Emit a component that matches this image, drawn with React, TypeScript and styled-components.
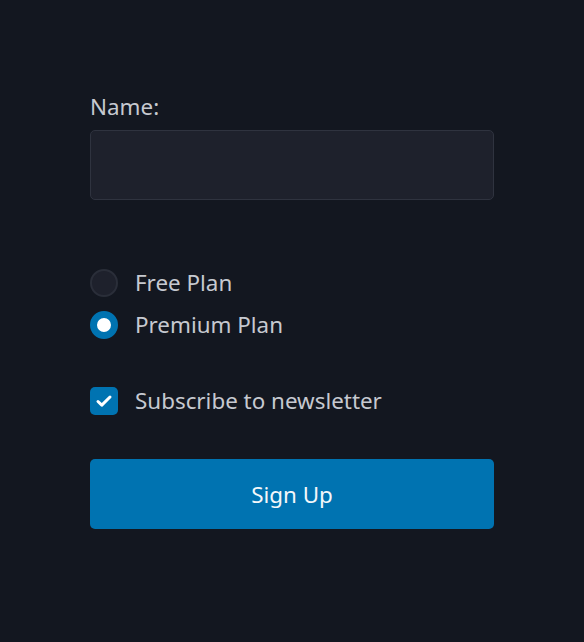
import styled, { createGlobalStyle } from 'styled-components';

const GlobalStyle = createGlobalStyle`
  html, body {
    margin: 0;
    padding: 0;
    background: #131720;
  }
  body {
    font-family: 'Noto Sans', 'Open Sans', sans-serif;
  }
`;

const Page = styled.div`
  min-height: 642px;
  display: flex;
  justify-content: center;
  padding-top: 92px;
  box-sizing: border-box;
`;

const Form = styled.form`
  width: 404px;
  display: flex;
  flex-direction: column;
`;

const Label = styled.label`
  font-size: 22.4px;
  line-height: 30px;
  color: #c6c9d0;
  margin-bottom: 8px;
`;

const TextInput = styled.input`
  height: 70px;
  box-sizing: border-box;
  background: #1e212c;
  border: 1px solid #2f333f;
  border-radius: 5px;
  color: #e5e7eb;
  font-size: 22.4px;
  padding: 0 16px;
  outline: none;
`;

const RadioGroup = styled.div`
  display: flex;
  flex-direction: column;
  gap: 14px;
  margin-top: 69px;
`;

const OptionRow = styled.label`
  display: flex;
  align-items: center;
  gap: 17px;
  font-size: 22.4px;
  line-height: 28px;
  color: #c6c9d0;
`;

const RadioDot = styled.span<{ $checked?: boolean }>`
  width: 28px;
  height: 28px;
  box-sizing: border-box;
  border-radius: 50%;
  flex-shrink: 0;
  background: ${(p) => (p.$checked ? '#ffffff' : '#1e212c')};
  border: ${(p) => (p.$checked ? '7px solid #0073b1' : '2px solid #2a2e39')};
`;

const CheckRow = styled(OptionRow)`
  margin-top: 48px;
`;

const CheckBox = styled.span`
  width: 28px;
  height: 28px;
  border-radius: 5px;
  background: #0073b1;
  flex-shrink: 0;
  display: flex;
  align-items: center;
  justify-content: center;
`;

const SubmitButton = styled.button`
  margin-top: 44px;
  height: 70px;
  border: none;
  border-radius: 5px;
  background: #0073b1;
  color: #f4f7fa;
  font-family: 'Noto Sans', 'Open Sans', sans-serif;
  font-size: 22.4px;
  cursor: pointer;
`;

export default function App() {
  return (
    <>
      <GlobalStyle />
      <Page>
        <Form onSubmit={(e) => e.preventDefault()}>
          <Label htmlFor="name">Name:</Label>
          <TextInput id="name" type="text" />
          <RadioGroup>
            <OptionRow>
              <RadioDot />
              Free Plan
            </OptionRow>
            <OptionRow>
              <RadioDot $checked />
              Premium Plan
            </OptionRow>
          </RadioGroup>
          <CheckRow>
            <CheckBox>
              <svg width="18" height="18" viewBox="0 0 18 18" fill="none">
                <path d="M3 9.5l3.8 3.6L15 5" stroke="#fff" strokeWidth="3" strokeLinecap="round" strokeLinejoin="round" />
              </svg>
            </CheckBox>
            Subscribe to newsletter
          </CheckRow>
          <SubmitButton type="submit">Sign Up</SubmitButton>
        </Form>
      </Page>
    </>
  );
}
